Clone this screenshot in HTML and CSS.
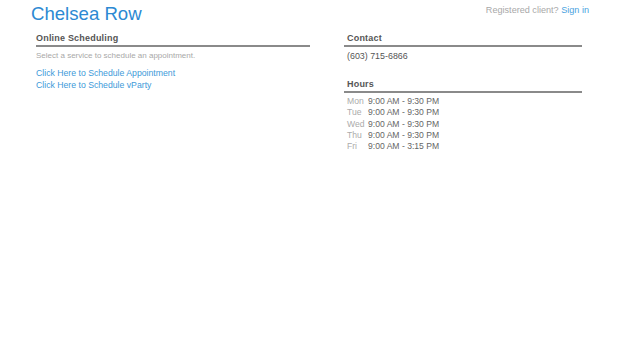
FILE: index.html
```html
<!DOCTYPE html>
<html>
<head>
<meta charset="utf-8">
<link rel="stylesheet" href="styles.css">
</head>
<body>
<div class="header">
  <div class="brand">Chelsea Row</div>
  <div class="signin">Registered client? <a href="#">Sign in</a></div>
</div>
<div class="main">
  <div class="col left">
    <h2 class="heading">Online Scheduling</h2>
    <p class="hint">Select a service to schedule an appointment.</p>
    <div class="links">
      <a href="#">Click Here to Schedule Appointment</a>
      <a href="#">Click Here to Schedule vParty</a>
    </div>
  </div>
  <div class="col right">
    <h2 class="heading">Contact</h2>
    <p class="phone">(603) 715-6866</p>
    <h2 class="heading hours-head">Hours</h2>
    <div class="hours">
      <div class="row"><span class="day">Mon</span><span class="time">9:00 AM - 9:30 PM</span></div>
      <div class="row"><span class="day">Tue</span><span class="time">9:00 AM - 9:30 PM</span></div>
      <div class="row"><span class="day">Wed</span><span class="time">9:00 AM - 9:30 PM</span></div>
      <div class="row"><span class="day">Thu</span><span class="time">9:00 AM - 9:30 PM</span></div>
      <div class="row"><span class="day">Fri</span><span class="time">9:00 AM - 3:15 PM</span></div>
    </div>
  </div>
</div>
</body>
</html>
```
FILE: styles.css
```css
html, body {
  margin: 0;
  padding: 0;
  background: #fff;
  font-family: "Liberation Sans", Arial, sans-serif;
}
a { text-decoration: none; color: #3d9ad9; }
.header {
  display: flex;
  justify-content: space-between;
  align-items: flex-start;
  padding: 3px 31px 0 31px;
}
.brand {
  font-size: 18.6px;
  line-height: 22px;
  color: #2c89d3;
}
.signin {
  font-size: 9.1px;
  color: #a8a8a8;
  padding-top: 2px;
}
.signin a { color: #4aa3e0; }
.main {
  display: flex;
  padding: 7px 0 0 36px;
}
.col.left { width: 274px; }
.col.right { width: 238px; margin-left: 34px; }
.heading {
  margin: 0;
  font-size: 9px;
  font-weight: bold;
  color: #555;
  line-height: 13px;
  padding-left: 0;
  border-bottom: 2px solid #8a8a8a;
  letter-spacing: 0.2px;
}
.right .heading { padding-left: 3px; }
.hint {
  margin: 3px 0 0 0;
  font-size: 8px;
  line-height: 11px;
  color: #a8a8a8;
}
.links {
  display: flex;
  flex-direction: column;
  margin-top: 7px;
  font-size: 8.7px;
  line-height: 11.5px;
}
.phone {
  margin: 3px 0 0 3px;
  font-size: 8.9px;
  line-height: 12px;
  color: #555;
}
.hours-head { margin-top: 16px; }
.hours {
  margin: 3px 0 0 3px;
  font-size: 8.6px;
  line-height: 11.3px;
}
.row { display: flex; }
.day { width: 21px; color: #ababab; }
.time { color: #666; }
```
